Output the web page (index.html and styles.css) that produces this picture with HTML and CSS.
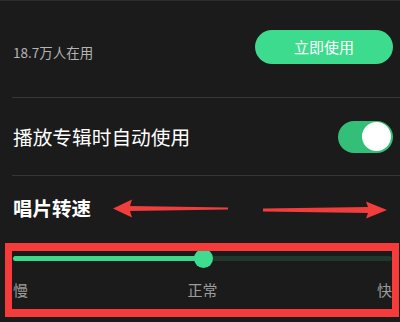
FILE: index.html
```html
<!DOCTYPE html>
<html lang="zh-CN">
<head>
<meta charset="utf-8">
<link rel="stylesheet" href="styles.css">
</head>
<body>
<div class="screen">
  <div class="row row-top">
    <div class="users">18.7万人在用</div>
    <button class="use-btn">立即使用</button>
  </div>
  <div class="sep"></div>
  <div class="row row-auto">
    <div class="label">播放专辑时自动使用</div>
    <div class="toggle"><div class="knob"></div></div>
  </div>
  <div class="sep"></div>
  <div class="speed">
    <div class="title">唱片转速</div>
    <div class="slider">
      <div class="track">
        <div class="fill" style="width:50%"></div>
        <div class="thumb"></div>
      </div>
    </div>
    <div class="ticks">
      <span>慢</span><span>正常</span><span>快</span>
    </div>
  </div>
  <div class="annot-box"></div>
  <svg class="annot" width="400" height="322" viewBox="0 0 400 322">
    <polygon points="113,208.5 132,199.5 130,206 228,207.5 228,209.5 130,211 132,217.5" fill="#f23d3d"/>
    <polygon points="263,208.5 368,207 366,201.5 387,210 366,218.5 368,213 263,211.5" fill="#f23d3d"/>
  </svg>
</div>
</body>
</html>
```
FILE: styles.css
```css
* { box-sizing: border-box; }
html, body { margin: 0; padding: 0; background: #1b1b1b; }
body {
  font-family: "Noto Sans CJK SC", "Noto Sans", sans-serif;
  width: 400px;
  height: 322px;
  overflow: hidden;
}
.screen {
  position: relative;
  width: 400px;
  height: 322px;
  border-top: 1px solid #2c2c2c;
}
.row {
  display: flex;
  align-items: center;
  justify-content: space-between;
  padding: 0 7px 0 13px;
}
.row-top {
  height: 96px;
  align-items: flex-start;
}
.users {
  margin-top: 42px;
  font-size: 13.5px;
  line-height: 18px;
  color: #b4b4b4;
}
.use-btn {
  margin-top: 29px;
  width: 138px;
  height: 34px;
  border: none;
  border-radius: 17px;
  background: #3ddb8d;
  color: #ffffff;
  font-family: inherit;
  font-size: 15px;
  padding: 0;
  line-height: 34px;
}
.sep {
  margin-left: 12px;
  height: 1px;
  background: #363636;
}
.row-auto { height: 77px; }
.label {
  font-size: 19.7px;
  line-height: 24px;
  color: #ffffff;
}
.toggle {
  width: 55px;
  height: 32px;
  border-radius: 16px;
  background: #33bf77;
  display: flex;
  justify-content: flex-end;
  align-items: center;
  padding: 0 2px;
}
.knob {
  width: 29px;
  height: 29px;
  border-radius: 50%;
  background: #ffffff;
}
.speed {
  padding: 20px 8px 0 13px;
}
.title {
  font-size: 19.5px;
  line-height: 24px;
  font-weight: 700;
  color: #ffffff;
}
.slider {
  margin-top: 29px;
  height: 18px;
  display: flex;
  align-items: center;
}
.track {
  position: relative;
  width: 100%;
  height: 5px;
  border-radius: 3px;
  background: #20382b;
}
.fill {
  height: 5px;
  border-radius: 3px;
  background: #3dd88a;
}
.thumb {
  position: absolute;
  left: calc(50% - 9px);
  top: -7px;
  width: 19px;
  height: 19px;
  border-radius: 50%;
  background: #3ddc8f;
}
.ticks {
  margin-top: 13px;
  display: flex;
  justify-content: space-between;
  font-size: 15px;
  line-height: 20px;
  color: #9c9c9c;
}
.annot-box {
  position: absolute;
  left: 5px;
  top: 242px;
  width: 394px;
  height: 74px;
  border: 7px solid #f73b3b;
  border-top-width: 8px;
  border-bottom-width: 8px;
}
.annot {
  position: absolute;
  left: 0;
  top: -1px;
  pointer-events: none;
}
```
